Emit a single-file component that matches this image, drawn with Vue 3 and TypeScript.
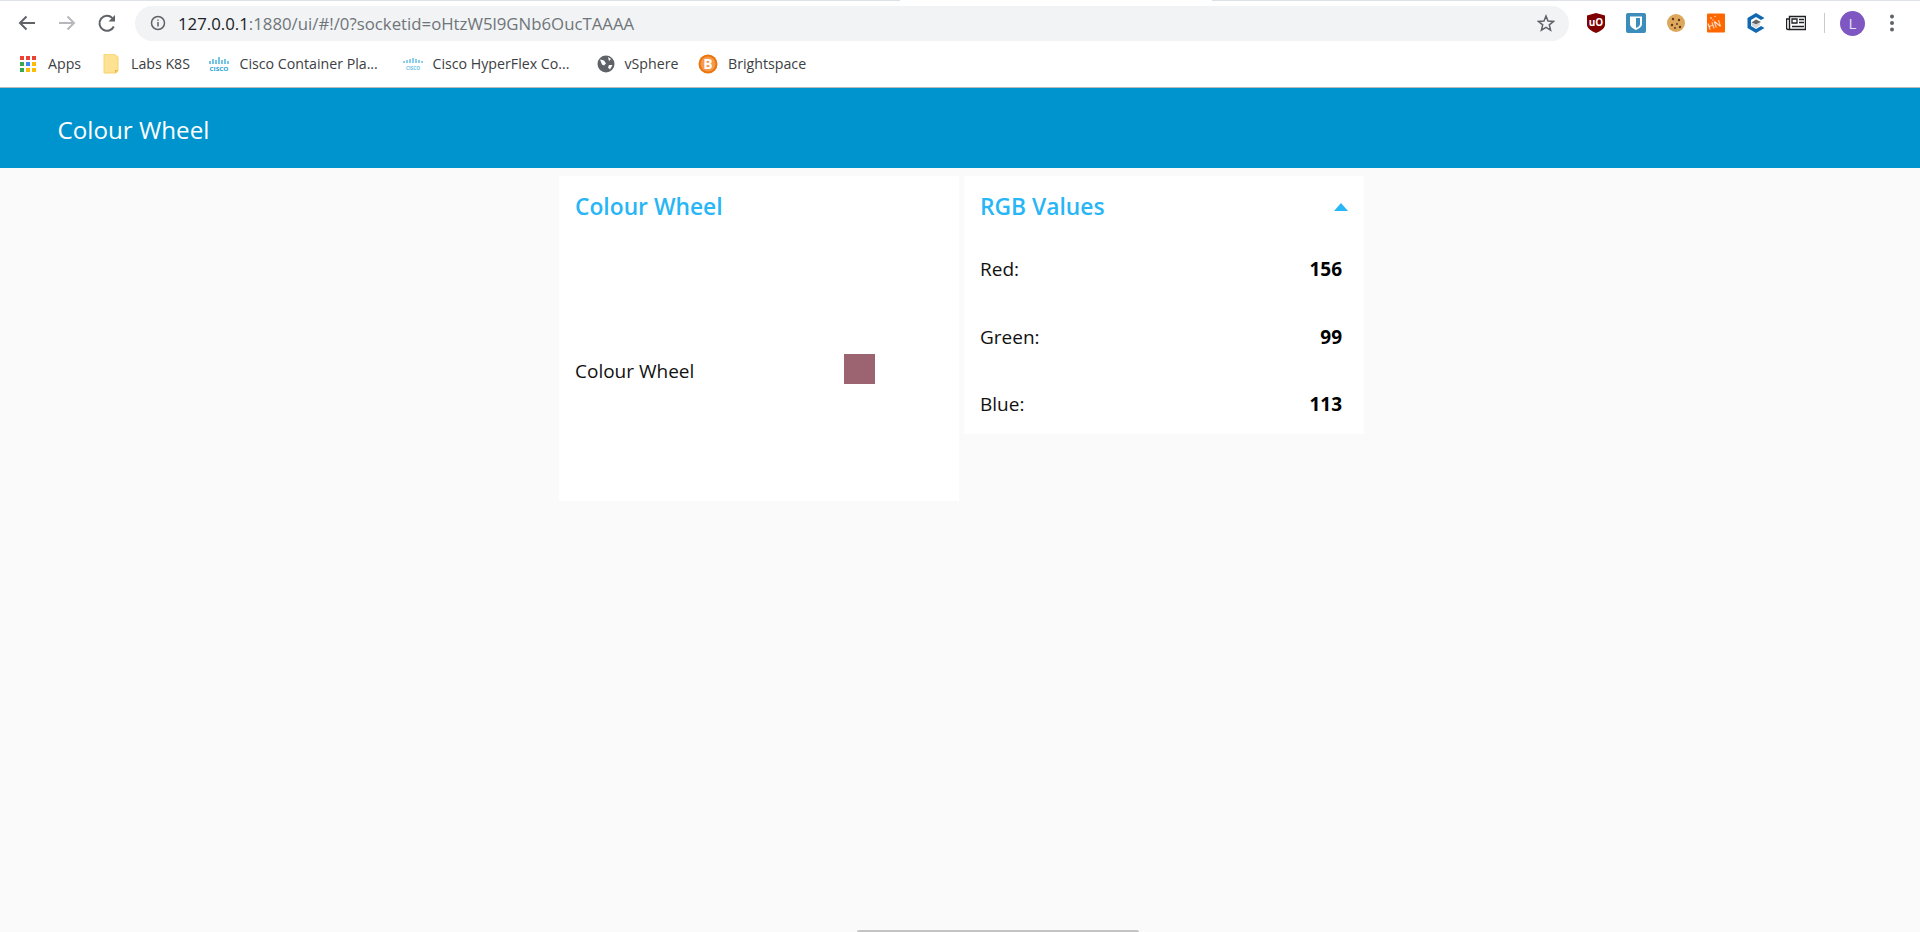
<script setup lang="ts">
const rows = [
  { label: 'Red:', value: 156 },
  { label: 'Green:', value: 99 },
  { label: 'Blue:', value: 113 },
]
</script>

<template>
  <div class="page">
    <div class="tabstrip"><div class="tabgap"></div></div>
    <div class="toolbar">
      <svg class="nav" width="24" height="24" viewBox="0 0 24 24"><path d="M20 12H5M11.500 5.500 5 12l6.500 6.500" fill="none" stroke="#5f6368" stroke-width="2" /></svg>
      <svg class="nav" width="24" height="24" viewBox="0 0 24 24"><path d="M4 12h15M12.500 5.500 19 12l-6.500 6.500" fill="none" stroke="#b6b8bb" stroke-width="2" /></svg>
      <svg class="nav" width="24" height="24" viewBox="0 0 24 24"><path d="M18.800 15.500A7.500 7.500 0 1 1 17.300 7" fill="none" stroke="#5f6368" stroke-width="2" /><path d="M20 4v6.500h-6.500z" fill="#5f6368" /></svg>
      <div class="omnibox">
        <svg class="info" width="16" height="16" viewBox="0 0 16 16"><circle cx="8" cy="8" r="6.500" fill="none" stroke="#5f6368" stroke-width="1.500" /><path d="M8 7v4.500M8 4.500v1.300" stroke="#5f6368" stroke-width="1.500" /></svg>
        <span class="url"><span class="host">127.0.0.1</span>:1880/ui/#!/0?socketid=oHtzW5l9GNb6OucTAAAA</span>
        <svg class="star" width="18" height="18" viewBox="0 0 18 18"><path d="M9 2l2 5 5.500.4-4.200 3.500 1.300 5.300L9 13.300l-4.600 2.900 1.300-5.300L1.500 7.400 7 7z" fill="none" stroke="#5f6368" stroke-width="1.500" /></svg>
      </div>
      <div class="extensions">
        <svg width="20" height="20" viewBox="0 0 20 20"><path d="M10 0l9 2.500v9c0 4-4.500 6.800-9 8.500-4.500-1.700-9-4.500-9-8.500v-9z" fill="#800000" /><text x="10" y="13" text-anchor="middle" class="ublock">uO</text></svg>
        <svg width="20" height="20" viewBox="0 0 20 20"><rect width="20" height="20" rx="2" fill="#3c8dbc" /><path d="M4 3.500h12v7.500c0 3-3 4.500-6 6-3-1.500-6-3-6-6z" fill="#fff" /><path d="M10 5h4v6c0 2-2 3-4 4z" fill="#3c8dbc" /></svg>
        <svg width="20" height="20" viewBox="0 0 20 20"><circle cx="10" cy="10" r="9" fill="#dda85c" /><circle cx="7" cy="6" r="1.200" fill="#5b3a1a" /><circle cx="13" cy="7" r="1.200" fill="#5b3a1a" /><circle cx="6" cy="12" r="1.200" fill="#5b3a1a" /><circle cx="11" cy="11" r="1" fill="#5b3a1a" /><circle cx="14" cy="14" r="1.200" fill="#5b3a1a" /><circle cx="9" cy="15" r="1" fill="#5b3a1a" /></svg>
        <svg width="20" height="20" viewBox="0 0 20 20"><rect x="1" y=".5" width="18" height="19" rx="1" fill="#ff6600" /><text x="3" y="17" transform="rotate(-18 3 17)" class="hn">HN</text><circle cx="5" cy="5" r="1" fill="#ffc9a0" /><circle cx="9" cy="3.500" r=".8" fill="#ffc9a0" /><circle cx="7" cy="7" r=".8" fill="#ffc9a0" /></svg>
        <svg width="20" height="20" viewBox="0 0 20 20"><path d="M10 0l8.500 5-3.500 2-5-3-5 3v6l5 3 5-3 3.500 2L10 20l-8.500-5V5z" fill="#1068b3" /><path d="M5.500 9.500 10 6.500l5 2.500-5 2.500z" fill="#666" /><path d="M5.500 9.500l4.500 2v3.500l-4.500-2.500zM10 11.500 14 9.500v2.500L10 15z" fill="#d5d5d5" /></svg>
        <svg width="20" height="20" viewBox="0 0 20 20"><path d="M3.500 3.500h16v13H2a1.500 1.500 0 0 1-1.500-1.500V6h3zM3.500 6v10" fill="none" stroke="#202124" stroke-width="1.400" /><path d="M6 6h5v4H6zM13 6.500h5M13 9.500h5M6 13.500h12" fill="none" stroke="#202124" stroke-width="1.300" /></svg>
      </div>
      <div class="separator"></div>
      <div class="avatar">L</div>
      <svg class="menu" width="6" height="20" viewBox="0 0 6 20"><circle cx="3" cy="3.500" r="2" fill="#5f6368" /><circle cx="3" cy="10" r="2" fill="#5f6368" /><circle cx="3" cy="16.500" r="2" fill="#5f6368" /></svg>
    </div>
    <div class="bookmarks">
      <div class="bookmark apps-mark">
        <svg width="16" height="16" viewBox="0 0 16 16"><rect x="0" y="0" width="4" height="4" fill="#ea4335" /><rect x="6" y="0" width="4" height="4" fill="#ea4335" /><rect x="12" y="0" width="4" height="4" fill="#ea4335" /><rect x="0" y="6" width="4" height="4" fill="#34a853" /><rect x="6" y="6" width="4" height="4" fill="#4285f4" /><rect x="12" y="6" width="4" height="4" fill="#fbbc05" /><rect x="0" y="12" width="4" height="4" fill="#34a853" /><rect x="6" y="12" width="4" height="4" fill="#fbbc05" /><rect x="12" y="12" width="4" height="4" fill="#fbbc05" /></svg>
        <span>Apps</span>
      </div>
      <div class="bookmark labs-mark">
        <svg width="16" height="20" viewBox="0 0 16 20"><path d="M1 0h10l4 3v14l-2 2H1z" fill="#fde293" stroke="#f6d36f" /><path d="M12 19v-3h3z" fill="#e8b93f" /></svg>
        <span>Labs K8S</span>
      </div>
      <div class="bookmark cisco-one">
        <svg width="20" height="16" viewBox="0 0 20 16"><path d="M1 5v3M4 3v5M7 4v4M10 1v7M13 4v4M16 3v5M19 5v3" stroke="#1ba0d7" stroke-width="1.200" /><text x="10" y="15" text-anchor="middle" textLength="19" lengthAdjust="spacingAndGlyphs" class="cisco">CISCO</text></svg>
        <span>Cisco Container Pla...</span>
      </div>
      <div class="bookmark cisco-two">
        <svg width="20" height="14" viewBox="0 0 20 14"><path d="M1 4v2M4 3v3M7 2v4M10 1v5M13 2v4M16 3v3M19 4v2" stroke="#1ba0d7" /><text x="10" y="13" text-anchor="middle" textLength="14" lengthAdjust="spacingAndGlyphs" class="cisco pale">CISCO</text></svg>
        <span>Cisco HyperFlex Co...</span>
      </div>
      <div class="bookmark vsphere-mark">
        <svg width="18" height="18" viewBox="0 0 18 18"><circle cx="9" cy="9" r="8.500" fill="#5f6368" /><path d="M3 4.500l4 1 2 3-2 2-2-1zM11 2l3 2-2 2zM12 10l3.500 0-2.500 4.500-2-2z" fill="#fff" /></svg>
        <span>vSphere</span>
      </div>
      <div class="bookmark bright-mark">
        <svg width="20" height="20" viewBox="0 0 20 20"><circle cx="10" cy="10" r="9.500" fill="#e8750e" /><circle cx="10" cy="10" r="7.500" fill="#f6994a" /><text x="10" y="15" text-anchor="middle" class="bright">B</text></svg>
        <span>Brightspace</span>
      </div>
    </div>
    <header class="appbar">Colour Wheel</header>
    <main class="content">
      <section class="card wheel-card">
        <h2 class="card-title">Colour Wheel</h2>
        <div class="wheel-row">
          <span>Colour Wheel</span>
          <span class="swatch"></span>
        </div>
      </section>
      <section class="card rgb-card">
        <div class="rgb-head">
          <h2 class="card-title">RGB Values</h2>
          <span class="caret"></span>
        </div>
        <div v-for="row in rows" :key="row.label" class="rgb-row">
          <span>{{ row.label }}</span>
          <strong>{{ row.value }}</strong>
        </div>
      </section>
    </main>
    <div class="scroll-wrap"><div class="scrollbar"></div></div>
  </div>
</template>

<style>
html,
body {
  margin: 0;
  overflow: hidden;
}
</style>

<style scoped>
.page {
  width: 1920px;
  height: 932px;
  display: flex;
  flex-direction: column;
  background: #fafafa;
  font-family: 'Open Sans', 'Noto Sans', sans-serif;
  overflow: hidden;
}
.tabstrip {
  height: 1px;
  background: #dee1e6;
  display: flex;
  padding-left: 900px;
}
.tabgap {
  width: 312px;
  background: #fff;
}
.toolbar {
  height: 44px;
  background: #fff;
  display: flex;
  align-items: center;
  padding-left: 15px;
  box-sizing: border-box;
}
.nav {
  margin-right: 16px;
}
.omnibox {
  width: 1434px;
  height: 35px;
  border-radius: 18px;
  background: #f1f3f4;
  display: flex;
  align-items: center;
  padding: 0 14px 0 15px;
  box-sizing: border-box;
}
.info {
  margin-right: 12px;
}
.url {
  flex: 1;
  font-size: 16.800px;
  color: #70757a;
  white-space: nowrap;
}
.host {
  color: #202124;
}
.extensions {
  display: flex;
  gap: 20px;
  margin-left: 17px;
}
.ublock {
  font-size: 10px;
  font-weight: 700;
  fill: #fff;
}
.hn {
  font-size: 9px;
  fill: #fff;
}
.cisco {
  font-size: 6px;
  font-weight: 700;
  fill: #1ba0d7;
}
.pale {
  font-size: 5px;
  fill: #6cc0e3;
}
.bright {
  font-size: 14px;
  font-weight: 700;
  fill: #fff;
}
.separator {
  width: 1px;
  height: 20px;
  background: #c8cacc;
  margin: 0 15px 0 18px;
}
.avatar {
  width: 25px;
  height: 25px;
  border-radius: 50%;
  background: #7e57c2;
  color: #e8e0f4;
  font-size: 15px;
  display: flex;
  align-items: center;
  justify-content: center;
}
.menu {
  margin-left: 24px;
}
.bookmarks {
  height: 37px;
  padding-bottom: 5px;
  background: #fff;
  border-bottom: 2px solid #b8babb;
  display: flex;
  align-items: center;
  font-size: 14.200px;
  color: #3c4043;
  padding-left: 20px;
}
.bookmark {
  display: flex;
  align-items: center;
  white-space: nowrap;
}
.apps-mark {
  gap: 12px;
  width: 83px;
}
.labs-mark {
  gap: 12px;
  width: 105.500px;
}
.cisco-one {
  gap: 11px;
  width: 194px;
}
.cisco-two {
  gap: 10px;
  width: 194px;
}
.vsphere-mark {
  gap: 10px;
  width: 101.500px;
}
.bright-mark {
  gap: 10px;
}
.appbar {
  height: 80px;
  flex: none;
  background: #0094ce;
  color: #fff;
  font-size: 24.200px;
  line-height: 84px;
  padding-left: 57.500px;
  box-sizing: border-box;
  margin-top: -1px;
}
.content {
  display: flex;
  align-items: flex-start;
  justify-content: center;
  gap: 5px;
  padding-top: 8px;
  padding-left: 3px;
  flex: 1;
}
.card {
  width: 400px;
  background: #fff;
  box-sizing: border-box;
  padding: 0 16px;
}
.wheel-card {
  height: 325px;
}
.rgb-card {
  height: 258px;
}
.card-title {
  margin: 0;
  font-size: 22.800px;
  font-weight: 600;
  color: #29b6f6;
  line-height: 30px;
  padding-top: 16px;
}
.wheel-row {
  display: flex;
  align-items: center;
  font-size: 19px;
  color: #111;
  margin-top: 132px;
}
.wheel-row span:first-child {
  width: 269px;
}
.swatch {
  width: 31px;
  height: 30px;
  margin-bottom: 4px;
  background: #9c6371;
}
.rgb-head {
  display: flex;
  justify-content: space-between;
  align-items: center;
  margin-bottom: 34px;
}
.caret {
  width: 0;
  height: 0;
  border-left: 7.500px solid transparent;
  border-right: 7.500px solid transparent;
  border-bottom: 8px solid #29b6f6;
  margin-top: 15px;
}
.rgb-row {
  height: 67.500px;
  display: flex;
  justify-content: space-between;
  align-items: flex-start;
  font-size: 19px;
  color: #111;
  line-height: 26px;
  padding-right: 6px;
}
.rgb-row strong {
  font-size: 19px;
  font-weight: 700;
  color: #000;
}
.scroll-wrap {
  flex: none;
  height: 2px;
  display: flex;
  justify-content: center;
  padding-left: 76px;
}
.scrollbar {
  width: 282px;
  background: #c4c4c4;
  border-radius: 2px 2px 0 0;
}
</style>
